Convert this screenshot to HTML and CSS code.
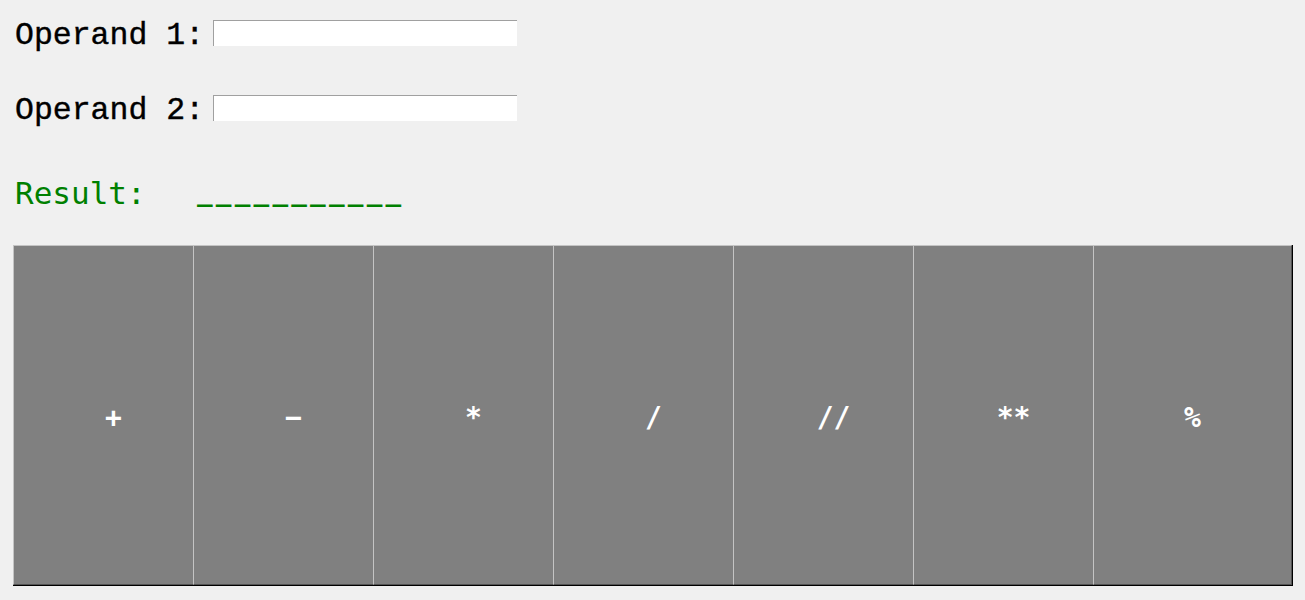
FILE: index.html
```html
<!DOCTYPE html>
<html>
<head>
<meta charset="utf-8">
<link rel="stylesheet" href="styles.css">
</head>
<body>
<div class="app">
  <div class="field">
    <span class="lbl">Operand 1:</span>
    <input class="entry" type="text">
  </div>
  <div class="field second">
    <span class="lbl">Operand 2:</span>
    <input class="entry" type="text">
  </div>
  <div class="result">
    <span class="rlbl">Result:</span>
    <span class="rval">___________</span>
  </div>
  <div class="ops">
    <button class="op">+</button>
    <button class="op">−</button>
    <button class="op">*</button>
    <button class="op">/</button>
    <button class="op">//</button>
    <button class="op">**</button>
    <button class="op last">%</button>
  </div>
</div>
</body>
</html>
```

FILE: styles.css
```css
html, body {
  margin: 0;
  padding: 0;
  background: #f0f0f0;
}

.app {
  padding-top: 20px;
}

.field {
  display: flex;
  align-items: flex-start;
  height: 26px;
  padding-left: 15px;
}

.field.second {
  margin-top: 49px;
}

.lbl {
  width: 198px;
  font-family: "Liberation Mono", monospace;
  font-size: 31.5px;
  line-height: 26px;
  padding-top: 3px;
  color: #000;
  white-space: pre;
  -webkit-text-stroke: 0.4px #000;
}

.entry {
  box-sizing: border-box;
  width: 304px;
  height: 26px;
  margin: 0;
  padding: 0 2px;
  background: #fff;
  border: none;
  border-top: 1px solid #a0a0a0;
  border-left: 1px solid #a0a0a0;
  outline: none;
}

.result {
  display: flex;
  align-items: baseline;
  height: 30px;
  margin-top: 57px;
  padding-left: 15px;
  font-family: "DejaVu Sans Mono", monospace;
  font-size: 31px;
  line-height: 30px;
  color: #008000;
  white-space: pre;
}

.rlbl {
  width: 182px;
}

.rval {
  font-weight: bold;
  font-size: 26px;
  letter-spacing: 3.2px;
  position: relative;
  top: -3px;
}

.ops {
  display: flex;
  margin-top: 37px;
  margin-left: 13px;
  width: 1279px;
  border-right: 1px solid #000;
  border-bottom: 1px solid #000;
}

.op {
  box-sizing: border-box;
  flex: none;
  width: 200px;
  height: 340px;
  margin: 0 -20px 0 0;
  padding: 4px 0 0 0;
  background: #808080;
  color: #fff;
  border: none;
  border-top: 1px solid #c4c4c4;
  border-left: 1px solid #c4c4c4;
  border-bottom: 1px solid #545454;
  font-family: "DejaVu Sans Mono", monospace;
  font-weight: bold;
  font-size: 28px;
}

.op.last {
  width: 199px;
  margin-right: 0;
  border-right: 1px solid #545454;
}
```
